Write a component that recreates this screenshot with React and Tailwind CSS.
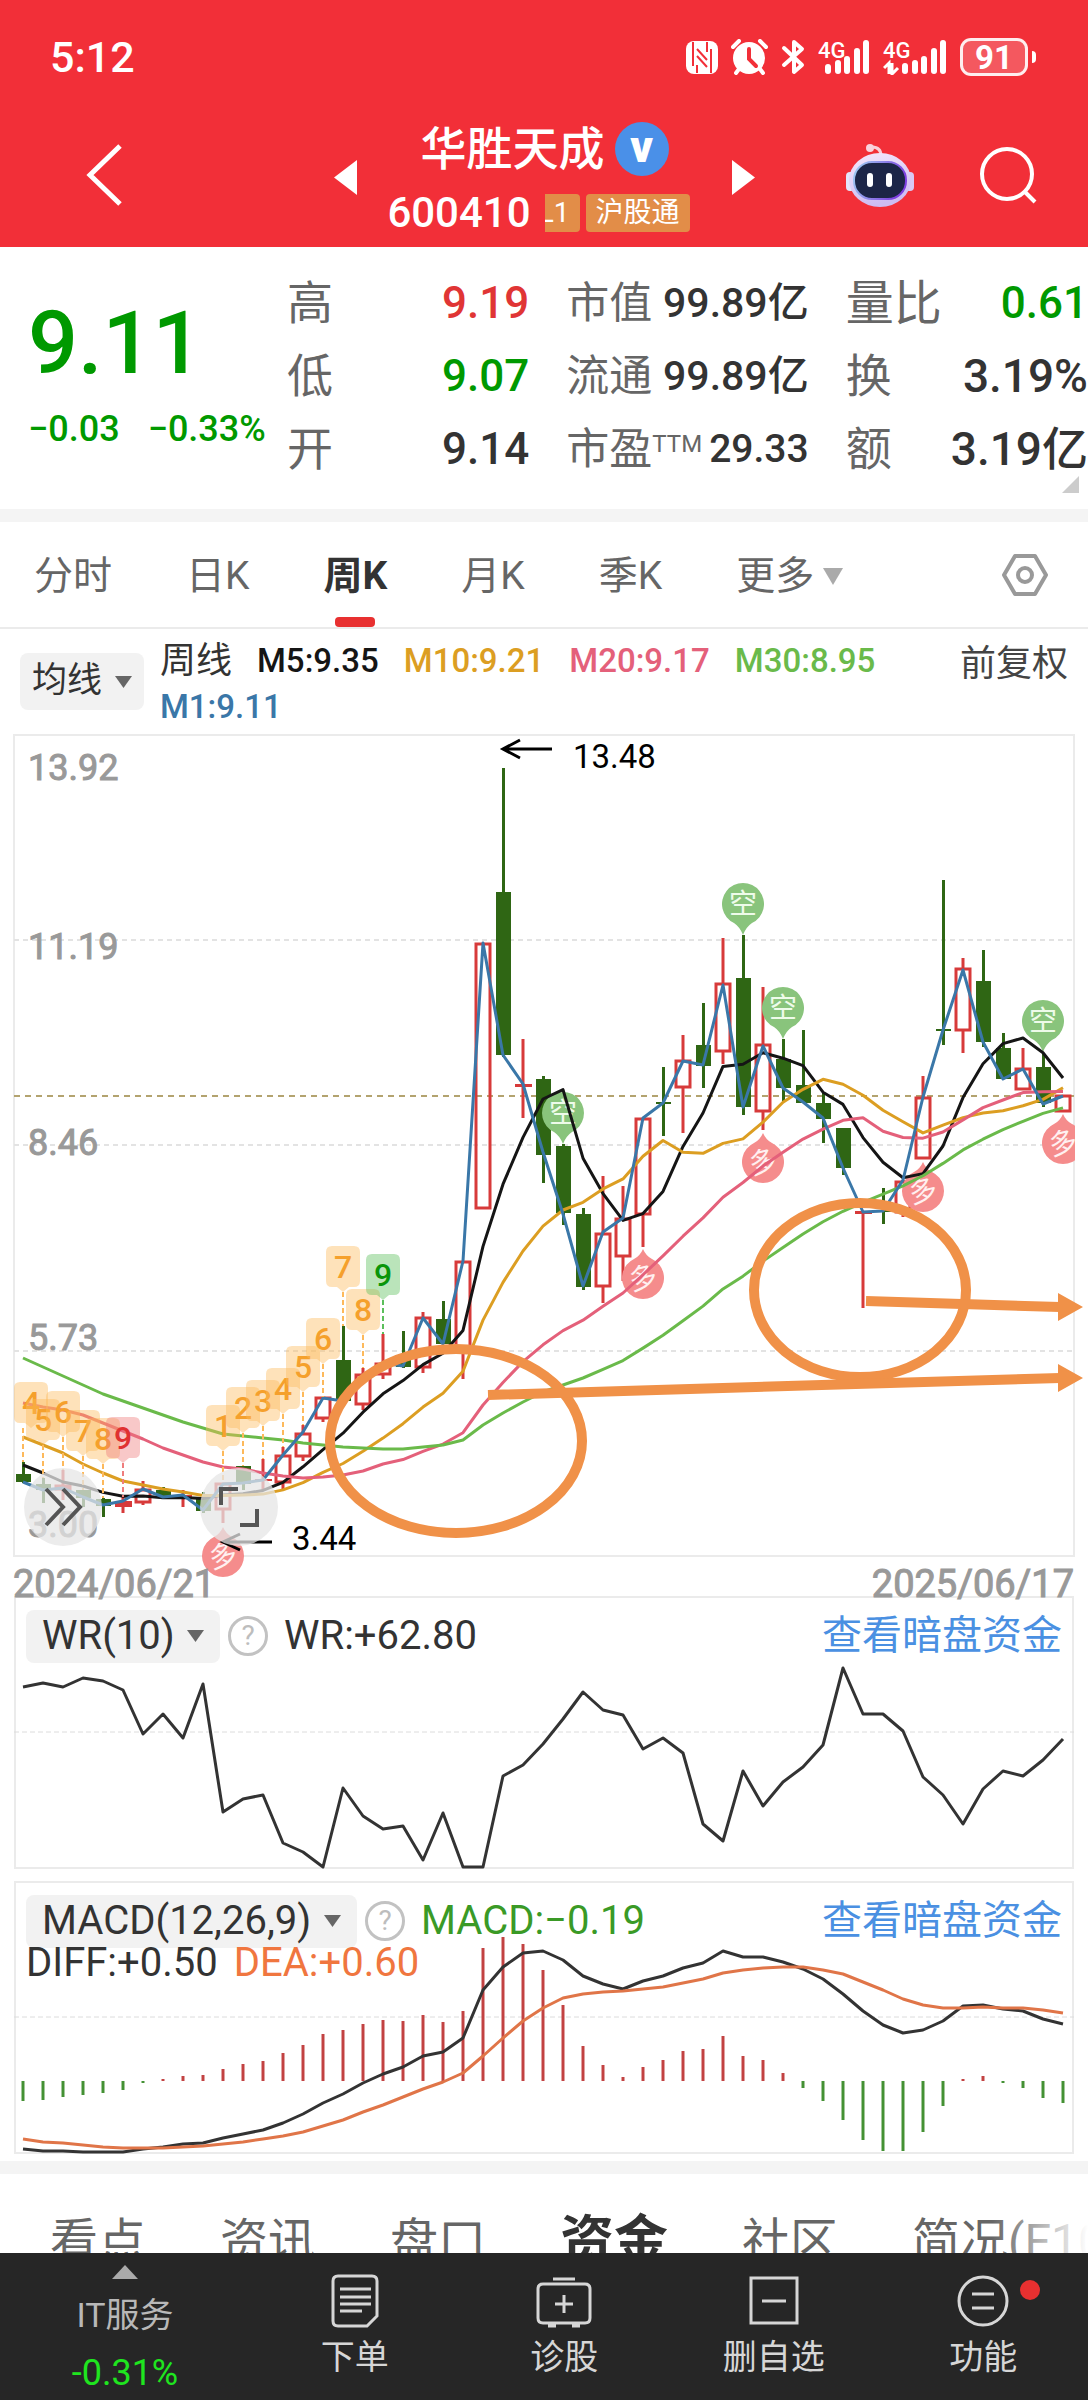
// x position of the n-th week on every chart
const X0 = 23;
const STEP = 20;
const x = (i) => X0 + STEP * i;

// [direction, high, body top, body bottom, low]
const candles = [
    ['d', 1462, 1474, 1482, 1483], ['d', 1478, 1484, 1490, 1503], ['u', 1470, 1486, 1489, 1500],
    ['d', 1490, 1490, 1498, 1507], ['d', 1498, 1499, 1506, 1517], ['f', 1497, 1501, 1507, 1513],
    ['u', 1481, 1490, 1502, 1505], ['d', 1487, 1490, 1497, 1498], ['f', 1490, 1495, 1497, 1507],
    ['d', 1492, 1497, 1511, 1513], ['u', 1483, 1484, 1509, 1523], ['d', 1466, 1466, 1484, 1490],
    ['f', 1459, 1479, 1481, 1490], ['u', 1447, 1456, 1482, 1489], ['u', 1425, 1434, 1456, 1461],
    ['u', 1397, 1398, 1418, 1422], ['d', 1326, 1360, 1401, 1401], ['u', 1368, 1375, 1404, 1410],
    ['u', 1334, 1364, 1374, 1379], ['d', 1331, 1358, 1367, 1368], ['u', 1312, 1318, 1367, 1373],
    ['d', 1301, 1319, 1344, 1344], ['u', 1261, 1262, 1352, 1379], ['u', 943, 944, 1208, 1209],
    ['d', 768, 892, 1055, 1057], ['f', 1039, 1084, 1087, 1118], ['d', 1076, 1079, 1155, 1183],
    ['d', 1144, 1146, 1213, 1225], ['d', 1208, 1214, 1287, 1290], ['u', 1176, 1234, 1286, 1303],
    ['u', 1186, 1219, 1256, 1281], ['u', 1118, 1119, 1214, 1247], ['d', 1067, 1102, 1104, 1136],
    ['u', 1035, 1061, 1087, 1133], ['d', 1003, 1045, 1066, 1088], ['u', 938, 984, 1051, 1064],
    ['d', 935, 978, 1107, 1115], ['u', 987, 1045, 1111, 1130], ['d', 1039, 1059, 1088, 1102],
    ['d', 1030, 1085, 1103, 1103], ['d', 1093, 1103, 1119, 1143], ['d', 1128, 1128, 1168, 1175],
    ['f', 1211, 1211, 1214, 1308], ['d', 1188, 1210, 1212, 1224], ['u', 1180, 1182, 1212, 1217],
    ['u', 1076, 1098, 1158, 1159], ['d', 880, 1029, 1031, 1045], ['u', 958, 969, 1030, 1053],
    ['d', 950, 981, 1042, 1047], ['d', 1033, 1048, 1079, 1079], ['u', 1048, 1069, 1089, 1090],
    ['d', 1053, 1067, 1103, 1107], ['u', 1095, 1096, 1111, 1112],
];

const closes = [
    1482, 1490, 1488, 1497, 1505, 1501, 1489, 1497, 1495, 1510, 1484, 1483, 1480, 1455, 1432, 1398, 1401, 1375,
    1363, 1366, 1318, 1344, 1261, 943, 1055, 1084, 1152, 1214, 1286, 1232, 1218, 1118, 1103, 1061, 1065, 985,
    1107, 1046, 1088, 1102, 1118, 1168, 1212, 1211, 1180, 1097, 1030, 970, 1042, 1079, 1069, 1104, 1096,
];

// first values of each average come from weeks before the visible range
const seed5 = [1465, 1473, 1482, 1486];
const seed10 = [1437, 1445, 1453, 1464, 1473, 1481, 1485, 1489, 1492];
const seed20 = [
    1403, 1407, 1410, 1415, 1423, 1431, 1439, 1448, 1455, 1462, 1467, 1469, 1473, 1476, 1478, 1477, 1475, 1471, 1464,
];
const seed30 = [
    1358, 1367, 1376, 1385, 1394, 1401, 1408, 1415, 1422, 1428, 1434, 1436, 1438, 1440, 1443, 1445, 1447, 1448,
    1449, 1449, 1447, 1445, 1440, 1425, 1413, 1402, 1392, 1385, 1378,
];

function average(period, seed) {
    return closes.map((_, i) => {
        if (i < seed.length) return seed[i];
        const part = closes.slice(i - period + 1, i + 1);
        return part.reduce((a, b) => a + b, 0) / period;
    });
}

const wr = [
    1687, 1683, 1687, 1678, 1681, 1690, 1734, 1714, 1738, 1684, 1812, 1799, 1795, 1843, 1852, 1867, 1788, 1816,
    1829, 1826, 1860, 1813, 1867, 1867, 1776, 1765, 1744, 1719, 1692, 1710, 1715, 1749, 1738, 1753, 1824, 1841,
    1771, 1806, 1782, 1767, 1745, 1668, 1714, 1714, 1731, 1777, 1795, 1824, 1789, 1771, 1776, 1760, 1739,
];

const ZERO = 2081;
const bars = [
    2101, 2100, 2097, 2095, 2093, 2090, 2083, 2079, 2076, 2075, 2069, 2064, 2061, 2053, 2045, 2034, 2030, 2024,
    2020, 2021, 2015, 2022, 2011, 1948, 1937, 1944, 1970, 2005, 2046, 2065, 2077, 2067, 2060, 2051, 2049, 2036,
    2056, 2060, 2073, 2088, 2101, 2120, 2140, 2151, 2151, 2132, 2106, 2079, 2076, 2083, 2088, 2098, 2103,
];
const diff = [
    2149, 2151, 2151, 2152, 2152, 2152, 2149, 2147, 2144, 2143, 2138, 2134, 2130, 2123, 2114, 2103, 2094, 2083,
    2074, 2067, 2056, 2052, 2038, 1990, 1967, 1953, 1951, 1960, 1976, 1984, 1989, 1981, 1976, 1968, 1963, 1951,
    1957, 1957, 1962, 1969, 1979, 1994, 2011, 2025, 2033, 2030, 2021, 2006, 2005, 2009, 2011, 2019, 2024,
];
const dea = [
    2139, 2142, 2143, 2145, 2147, 2148, 2148, 2148, 2147, 2146, 2144, 2142, 2139, 2136, 2132, 2126, 2120, 2112,
    2105, 2097, 2089, 2082, 2073, 2056, 2038, 2021, 2008, 1998, 1994, 1992, 1991, 1989, 1987, 1983, 1979, 1973,
    1970, 1968, 1967, 1967, 1970, 1974, 1982, 1990, 1999, 2005, 2008, 2008, 2007, 2008, 2008, 2010, 2013,
];

// nine-turn tags: [number, box centre x, box top y, week, colour]
const tags = [
    [4, 31, 1382, 0, 'o'], [5, 43, 1399, 1, 'o'], [6, 63, 1391, 2, 'o'], [7, 83, 1410, 3, 'o'],
    [8, 103, 1418, 4, 'o'], [9, 123, 1417, 5, 'r'], [1, 223, 1405, 10, 'o'], [2, 243, 1387, 11, 'o'],
    [3, 263, 1380, 12, 'o'], [4, 283, 1368, 13, 'o'], [5, 303, 1346, 14, 'o'], [6, 323, 1318, 15, 'o'],
    [7, 343, 1246, 16, 'o'], [8, 363, 1289, 17, 'o'], [9, 383, 1254, 18, 'g'],
];
const tagColors = {
    o: { box: '#fdb95b', text: '#f5a02c' },
    r: { box: '#ef7d7d', text: '#e03131' },
    g: { box: '#5bbf5b', text: '#0a950a' },
};

const shorts = [[27, 1113], [36, 904], [38, 1008], [51, 1021]];
const longs = [[10, 1554], [31, 1276], [37, 1160], [45, 1189], [52, 1141]];

const points = (values) => values.map((y, i) => `${x(i)},${y}`).join(' ');

function Line({ values, color, width = 3 }) {
    return <polyline points={points(values)} fill="none" stroke={color} strokeWidth={width} strokeLinejoin="round" />;
}

function Candle({ data, i }) {
    const [dir, high, top, bottom, low] = data;
    if (dir === 'd') {
        return (
            <g fill="#2f6614">
                <rect x={x(i) - 1} y={high} width="3" height={low - high} />
                <rect x={x(i) - 7} y={top} width="15" height={bottom - top} />
            </g>
        );
    }
    return (
        <g stroke="#d73a3a" strokeWidth="3" fill="none">
            <path d={`M${x(i)} ${high}V${top}M${x(i)} ${bottom}V${low}`} />
            {dir === 'f'
                ? <rect x={x(i) - 8} y={top} width="17" height={bottom - top} fill="#d73a3a" stroke="none" />
                : <rect x={x(i) - 7} y={top} width="14" height={bottom - top} />}
        </g>
    );
}

function Tag({ data }) {
    const [num, cx, top, week, tone] = data;
    const c = tagColors[tone];
    const tip = top + 46;
    return (
        <g>
            <path d={`M${x(week)} ${tip}V${candles[week][1]}`} stroke={c.box} strokeWidth="2" strokeDasharray="5 3" />
            <path
                d={`M${cx - 11} ${top}h22q6 0 6 6v29q0 6 -6 6h-5l-6 5l-6 -5h-5q-6 0 -6 -6v-29q0 -6 6 -6z`}
                fill={c.box}
                fillOpacity="0.42"
            />
            <text x={cx} y={top + 32} fontSize="32" fontWeight="500" textAnchor="middle" fill={c.text}>{num}</text>
        </g>
    );
}

function ShortMark({ i, y }) {
    return (
        <g>
            <path
                d={`M${x(i)} ${y + 31}q-3 -8 -9 -12a21 21 0 1 1 18 0q-6 4 -9 12z`}
                fill="#89c47c"
            />
            <text x={x(i)} y={y + 10} fontSize="28" textAnchor="middle" fill="#eefbea">空</text>
        </g>
    );
}

function LongMark({ i, y }) {
    return (
        <g>
            <path
                d={`M${x(i)} ${y - 27}q3 7 9 10a21 21 0 1 1 -18 0q6 -3 9 -10z`}
                fill="#f58c8c"
            />
            <text
                x={x(i)}
                y={y + 12}
                fontSize="28"
                textAnchor="middle"
                fill="#fff0f0"
                transform={`rotate(-14 ${x(i)} ${y + 2})`}
            >
                多
            </text>
        </g>
    );
}

function KLineChart() {
    return (
        <svg viewBox="0 734 1088 862" className="block w-full overflow-visible font-[Roboto,'Noto_Sans_CJK_SC',sans-serif]">
            <defs>
                <clipPath id="frame"><rect x="0" y="734" width="1075" height="862" /></clipPath>
            </defs>
            <rect x="14" y="735" width="1060" height="821" fill="none" stroke="#ebebeb" strokeWidth="2" />
            <path d="M14 940H1074M14 1145H1074M14 1351H1074" stroke="#e3e3e3" strokeWidth="2" strokeDasharray="5 4" />
            <path d="M14 1096H1074" stroke="#b3a36f" strokeWidth="2" strokeDasharray="6 5" />

            <g fontSize="36" fill="#999999" stroke="#999999" strokeWidth="1">
                <text x="28" y="780">13.92</text>
                <text x="28" y="959">11.19</text>
                <text x="28" y="1155">8.46</text>
                <text x="28" y="1350">5.73</text>
                <text x="28" y="1537">3.00</text>
            </g>

            <g clipPath="url(#frame)">
                {candles.map((c, i) => <Candle key={i} data={c} i={i} />)}
                {shorts.map(([i, y]) => <ShortMark key={i} i={i} y={y} />)}
                {longs.map(([i, y]) => <LongMark key={i} i={i} y={y} />)}
                <Line values={average(5, seed5)} color="#151515" />
                <Line values={average(10, seed10)} color="#dc9e22" />
                <Line values={average(20, seed20)} color="#e4607a" />
                <Line values={average(30, seed30)} color="#6aba4a" />
                <Line values={closes} color="#3a77a8" />
                {tags.map((t, i) => <Tag key={i} data={t} />)}
            </g>

            {/* extremes */}
            <g fill="none" stroke="#000" strokeWidth="3">
                <path d="M552 749H503M520 740L503 749L520 758" />
                <path d="M272 1542H223M240 1534L223 1542L240 1550" />
            </g>
            <text x="573" y="768" fontSize="33">13.48</text>
            <text x="292" y="1550" fontSize="33">3.44</text>

            {/* hand-made marks */}
            <g fill="none" stroke="#f09148" strokeWidth="10">
                <ellipse cx="456" cy="1441" rx="126" ry="92" />
                <ellipse cx="860" cy="1290" rx="106" ry="87" />
                <path d="M866 1301L1060 1307M488 1395L1060 1378" />
            </g>
            <path d="M1058 1293L1083 1307L1058 1321zM1058 1364L1083 1378L1058 1392z" fill="#f09148" />

            <g fontSize="38" fill="#999999" stroke="#999999" strokeWidth="1">
                <text x="13" y="1597">2024/06/21</text>
                <text x="1074" y="1597" textAnchor="end">2025/06/17</text>
            </g>
        </svg>
    );
}

function WrChart() {
    return (
        <svg viewBox="14 1596 1060 274" className="col-start-1 row-start-1 block w-full">
            <rect x="15" y="1597" width="1058" height="271" fill="none" stroke="#ebebeb" strokeWidth="2" />
            <path d="M14 1732H1074" stroke="#dcdcdc" strokeWidth="1" strokeDasharray="5 3" />
            <Line values={wr} color="#333333" />
        </svg>
    );
}

function MacdChart() {
    return (
        <svg viewBox="14 1881 1060 274" className="col-start-1 row-start-1 block w-full">
            <rect x="15" y="1882" width="1058" height="271" fill="none" stroke="#ebebeb" strokeWidth="2" />
            <path d="M14 2017H1074" stroke="#dcdcdc" strokeWidth="1" strokeDasharray="5 3" />
            {bars.map((y, i) => (
                <path key={i} d={`M${x(i)} ${ZERO}V${y}`} stroke={y < ZERO ? '#c24242' : '#449134'} strokeWidth="3" />
            ))}
            <Line values={diff} color="#333333" />
            <Line values={dea} color="#e07548" />
        </svg>
    );
}

function Dropdown({ label, value, className }) {
    return (
        <div className={`flex shrink-0 items-center gap-3 rounded-lg bg-[#f2f2f2] text-[#333] ${className}`}>
            <select aria-label={label} className="appearance-none bg-transparent outline-none" defaultValue={value}>
                <option>{value}</option>
            </select>
            <svg viewBox="0 0 17 12" className="h-3 w-[17px]"><path d="M0 0h17L8.500 12z" fill="#666" /></svg>
        </div>
    );
}

function HelpButton() {
    return (
        <button
            aria-label="说明"
            className="flex size-10 shrink-0 items-center justify-center rounded-full border-3 border-[#c2c2c2] text-[28px] leading-none text-[#bdbdbd]"
        >
            ?
        </button>
    );
}

function SignalBars({ extra }) {
    return extra ? (
        <svg viewBox="0 0 64 36" className="h-9 w-16" fill="#fff">
            <text x="0" y="19" fontSize="22" fontWeight="500">4G</text>
            <path d="M1 29l5-5v11M9 24v11l6-6" fill="none" stroke="#fff" strokeWidth="3" />
            <rect x="19" y="24" width="6" height="11" rx="3" />
            <rect x="29" y="21" width="6" height="14" rx="3" />
            <rect x="38" y="17" width="6" height="18" rx="3" />
            <rect x="48" y="9" width="6" height="26" rx="3" />
            <rect x="57" y="1" width="6" height="34" rx="3" />
        </svg>
    ) : (
        <svg viewBox="0 0 52 36" className="h-9 w-[52px]" fill="#fff">
            <text x="0" y="19" fontSize="22" fontWeight="500">4G</text>
            <rect x="7" y="25" width="6" height="10" rx="3" />
            <rect x="17" y="21" width="6" height="14" rx="3" />
            <rect x="26" y="17" width="6" height="18" rx="3" />
            <rect x="36" y="9" width="6" height="26" rx="3" />
            <rect x="45" y="1" width="6" height="34" rx="3" />
        </svg>
    );
}

function StatusBar() {
    return (
        <div className="flex h-[114px] items-center justify-between pl-[50px] pr-[52px]">
            <span className="text-[43px] font-medium leading-none">5:12</span>
            <div className="flex items-center gap-[13px]">
                <svg viewBox="0 0 32 33" className="h-[33px] w-8">
                    <rect x="0" y="0" width="32" height="33" rx="8" fill="#fff" />
                    <path d="M7 1V25M25 8V32" stroke="#f22f38" strokeWidth="2" />
                    <path d="M11 8L21 19M11 15L21 26M11 24V32M21 1V11" fill="none" stroke="#f22f38" strokeWidth="2" />
                </svg>
                <svg viewBox="0 0 37 36" className="h-9 w-[37px]">
                    <circle cx="18" cy="19" r="16" fill="#fff" />
                    <path d="M2 8l6-6M35 8l-6-6M8 30l-3 4M29 30l3 4" stroke="#fff" strokeWidth="4" strokeLinecap="round" />
                    <path d="M18 10v10l7 7" fill="none" stroke="#f22f38" strokeWidth="4" strokeLinecap="round" />
                </svg>
                <svg viewBox="0 0 24 36" className="h-9 w-6" fill="none" stroke="#fff" strokeWidth="4" strokeLinejoin="round" strokeLinecap="round">
                    <path d="M3 9l18 17l-8 7V3l8 7L3 26" />
                </svg>
                <SignalBars />
                <SignalBars extra />
                <div className="flex items-center gap-1">
                    <span className="flex h-[38px] w-[68px] items-center justify-center rounded-[11px] border-3 border-white/90 bg-white/20 text-[33px] font-bold leading-none">
                        91
                    </span>
                    <span className="h-3 w-1 rounded-r-full bg-white" />
                </div>
            </div>
        </div>
    );
}

function Robot() {
    return (
        <svg viewBox="0 0 70 66" className="h-[66px] w-[70px]">
            <defs>
                <linearGradient id="shell" x1="0" y1="0" x2="0.3" y2="1">
                    <stop offset="0" stopColor="#f6e8fb" />
                    <stop offset="1" stopColor="#cdbcf2" />
                </linearGradient>
                <linearGradient id="rim" x1="0" y1="0" x2="1" y2="0.3">
                    <stop offset="0" stopColor="#9fd2f2" />
                    <stop offset="1" stopColor="#7d3fe0" />
                </linearGradient>
            </defs>
            <circle cx="25" cy="6" r="4" fill="#f9d3dd" />
            <path d="M27 5q9 0 9 9" fill="none" stroke="#f9cfd8" strokeWidth="3" />
            <rect x="1" y="30" width="9" height="19" rx="4" fill="#e3e6fb" />
            <rect x="60" y="30" width="9" height="19" rx="4" fill="#d9c9f5" />
            <ellipse cx="35" cy="38" rx="31" ry="27" fill="url(#shell)" />
            <rect x="9" y="20" width="52" height="37" rx="18" fill="#1c2547" stroke="url(#rim)" strokeWidth="2" />
            <rect x="22" y="31" width="6" height="14" rx="3" fill="#fff" />
            <rect x="41" y="31" width="6" height="14" rx="3" fill="#fff" />
        </svg>
    );
}

function Header() {
    return (
        <header className="bg-[#f22f38] text-white">
            <StatusBar />
            <div className="grid h-[133px] grid-cols-[1fr_auto_1fr] items-start pl-[84px] pr-[51px] pt-2">
                <button aria-label="返回" className="mt-[22px] w-10">
                    <svg viewBox="0 0 40 62" className="h-[62px] w-10" fill="none" stroke="#fff" strokeWidth="5">
                        <path d="M36 2L6 31L36 60" />
                    </svg>
                </button>
                <div className="flex w-[421px] -translate-x-4 justify-between">
                    <button aria-label="上一只" className="mt-[38px] self-start">
                        <svg viewBox="0 0 23 35" className="h-[35px] w-[23px]"><path d="M23 0v35L0 17.500z" fill="#fff" /></svg>
                    </button>
                    <div className="flex flex-col items-center gap-[18px]">
                        <div className="flex items-center gap-[10px]">
                            <h1 className="text-[46px] font-medium leading-[54px]">华胜天成</h1>
                            <span className="flex size-[54px] items-center justify-center rounded-full bg-[#4a90e8] pb-1 text-[44px] font-black leading-none">v</span>
                        </div>
                        <div className="flex items-center gap-[6px] pr-3">
                            <span className="mr-2 text-[42px] font-medium leading-[38px]">600410</span>
                            <span className="flex h-[38px] w-[35px] justify-end overflow-hidden rounded-r bg-[#e28d48] pr-[10px] text-[28px] leading-[38px]">L1</span>
                            <span className="h-[38px] rounded bg-[#e28d48] px-[10px] text-[28px] leading-[38px]">沪股通</span>
                        </div>
                    </div>
                    <button aria-label="下一只" className="mt-[38px] self-start">
                        <svg viewBox="0 0 23 35" className="h-[35px] w-[23px]"><path d="M0 0v35L23 17.500z" fill="#fff" /></svg>
                    </button>
                </div>
                <div className="mt-5 flex items-center justify-end gap-16">
                    <button aria-label="智能助手"><Robot /></button>
                    <button aria-label="搜索">
                        <svg viewBox="0 0 58 58" className="size-[58px]" fill="none" stroke="#fff" strokeWidth="4">
                            <circle cx="28" cy="28" r="25" />
                            <path d="M45 45l11 11" />
                        </svg>
                    </button>
                </div>
            </div>
        </header>
    );
}

function Quote({ label, sup, value, color = 'text-[#333]', size = 'text-[44px]', labelSize = 'text-[46px]' }) {
    return (
        <div className="flex items-center justify-between whitespace-nowrap">
            <dt className={`text-[#666] ${labelSize} leading-[73px]`}>
                {label}
                {sup && <sup className="text-[24px]">{sup}</sup>}
            </dt>
            <dd className={`font-medium leading-[73px] ${size} ${color}`}>{value}</dd>
        </div>
    );
}

function QuotePanel() {
    return (
        <section className="relative grid h-[262px] grid-cols-[250px_1fr_1fr_1fr] gap-x-[37px] pt-5">
            <div className="whitespace-nowrap pl-7 text-[#009900]">
                <p className="mt-7 text-[88px] font-medium leading-[96px]">9.11</p>
                <p className="mt-4 flex gap-7 text-[36px] font-medium leading-[44px]">
                    <span>−0.03</span>
                    <span>−0.33%</span>
                </p>
            </div>
            <dl>
                <Quote label="高" value="9.19" color="text-[#e03535]" />
                <Quote label="低" value="9.07" color="text-[#009900]" />
                <Quote label="开" value="9.14" />
            </dl>
            <dl>
                <Quote label="市值" value="99.89亿" size="text-[41px]" labelSize="text-[43px]" />
                <Quote label="流通" value="99.89亿" size="text-[41px]" labelSize="text-[43px]" />
                <Quote label="市盈" sup="TTM" value="29.33" size="text-[39px]" labelSize="text-[43px]" />
            </dl>
            <dl>
                <Quote label="量比" value="0.61" color="text-[#009900]" labelSize="text-[48px]" />
                <Quote label="换" value="3.19%" size="text-[46px]" />
                <Quote label="额" value="3.19亿" size="text-[46px]" />
            </dl>
            <span className="absolute bottom-4 right-[9px] size-[17px] bg-[#ccc] [clip-path:polygon(100%_0,100%_100%,0_100%)]" />
        </section>
    );
}

function PeriodTabs() {
    const tabs = ['分时', '日K', '周K', '月K', '季K'];
    return (
        <nav className="flex h-[107px] items-center border-b-2 border-[#ebebeb] pl-[34px] pr-10 text-[39px] text-[#666]">
            <div className="flex h-full flex-1 gap-[74px]">
                {tabs.map((tab) => (
                    <button key={tab} className={`relative h-full pt-1 ${tab === '周K' ? 'font-bold text-[#333]' : ''}`}>
                        {tab}
                        {tab === '周K' && (
                            <span className="absolute bottom-0 left-1/2 h-[10px] w-10 -translate-x-1/2 rounded bg-[#e83030]" />
                        )}
                    </button>
                ))}
                <button className="flex items-center gap-[9px] pt-1">
                    更多
                    <svg viewBox="0 0 20 17" className="h-[17px] w-5"><path d="M0 0h20L10 17z" fill="#aaa" /></svg>
                </button>
            </div>
            <button aria-label="设置">
                <svg viewBox="0 0 46 44" className="h-11 w-[46px]" fill="none" stroke="#999" strokeWidth="4" strokeLinejoin="round">
                    <path d="M13 3h20l11 19l-11 19H13L2 22z" />
                    <circle cx="23" cy="22" r="7" />
                </svg>
            </button>
        </nav>
    );
}

function AverageLegend() {
    return (
        <div className="flex h-[105px] items-center gap-4 px-5">
            <Dropdown label="指标" value="均线" className="h-[57px] px-3 text-[35px]" />
            <div className="flex flex-1 flex-wrap gap-x-[25px] whitespace-nowrap pt-1 text-[33px] font-medium leading-[46px]">
                <span className="text-[36px] font-normal text-[#333]">周线</span>
                <span className="text-[#151515]">M5:9.35</span>
                <span className="text-[#dc9e22]">M10:9.21</span>
                <span className="text-[#e4607a]">M20:9.17</span>
                <span className="text-[#6aba4a]">M30:8.95</span>
                <span className="basis-full text-[#3a77a8]">M1:9.11</span>
            </div>
            <button className="self-start pt-3 text-[36px] leading-[46px] text-[#444]">前复权</button>
        </div>
    );
}

function WrPanel() {
    return (
        <section className="mx-[14px] grid">
            <WrChart />
            <div className="z-10 col-start-1 row-start-1 flex h-20 items-center gap-2 self-start pl-3 pr-[12px] text-[40px] text-[#333]">
                <Dropdown label="副图一" value="WR(10)" className="h-[53px] px-4" />
                <HelpButton />
                <span className="ml-2 flex-1">WR:+62.80</span>
                <a href="#wr" className="text-[#4a90e2]">查看暗盘资金</a>
            </div>
        </section>
    );
}

function MacdPanel() {
    return (
        <section className="mx-[14px] mt-[11px] grid">
            <MacdChart />
            <div className="z-10 col-start-1 row-start-1 self-start text-[40px] text-[#333]">
                <div className="flex h-20 items-center gap-2 pl-3 pr-[12px]">
                    <Dropdown label="副图二" value="MACD(12,26,9)" className="h-[53px] px-4" />
                    <HelpButton />
                    <span className="ml-2 flex-1 text-[#3a9a26]">MACD:−0.19</span>
                    <a href="#macd" className="text-[#4a90e2]">查看暗盘资金</a>
                </div>
                <p className="-mt-4 flex gap-4 pl-3 leading-[36px]">
                    <span>DIFF:+0.50</span>
                    <span className="text-[#f0763f]">DEA:+0.60</span>
                </p>
            </div>
        </section>
    );
}

function SectionTabs() {
    const tabs = ['看点', '资讯', '盘口', '资金', '社区', '简况(F10)'];
    return (
        <nav className="relative flex items-center gap-[74px] overflow-hidden whitespace-nowrap pl-[50px] pt-[30px] text-[48px] leading-[76px] text-[#666]">
            {tabs.map((tab) => (
                <button key={tab} className={tab === '资金' ? 'text-[54px] font-bold text-[#333]' : ''}>{tab}</button>
            ))}
            <span className="absolute inset-y-0 right-0 w-24 bg-linear-to-r from-white/0 to-white" />
        </nav>
    );
}

function BottomItem({ label, children }) {
    return (
        <button className="flex flex-1 flex-col items-center gap-[7px] pt-[21px]">
            <svg viewBox="0 0 56 54" className="h-[54px] w-14 overflow-visible" fill="none" stroke="#d6d6d6" strokeWidth="3">
                {children}
            </svg>
            <span className="text-[34px] leading-[44px]">{label}</span>
        </button>
    );
}

function BottomBar() {
    return (
        <footer className="flex h-[147px] shrink-0 items-start bg-[#262626] text-[#d6d6d6]">
            <a href="#it" className="flex w-[250px] flex-col items-center pt-3 text-[#b8b8b8]">
                <svg viewBox="0 0 26 14" className="h-[14px] w-[26px]"><path d="M13 0L26 14H0z" fill="#aaa" /></svg>
                <span className="mt-[14px] text-[34px] leading-[44px]">IT服务</span>
                <span className="mt-4 text-[36px] leading-[40px] text-[#1fe51f]">-0.31%</span>
            </a>
            <BottomItem label="下单">
                <path d="M11 2h34q5 0 5 5v35l-10 10H11q-5 0-5-5V7q0-5 5-5z" />
                <path d="M13 15h31M13 23h31M13 30h31M13 37h22" />
            </BottomItem>
            <BottomItem label="诊股">
                <path d="M17 5h22M7 10h42q5 0 5 5v29q0 5-5 5H7q-5 0-5-5V15q0-5 5-5zM12 52h8M36 52h8M28 21v18M19 30h18" />
            </BottomItem>
            <BottomItem label="删自选">
                <path d="M5 4h46v45H5zM16 27h24" />
            </BottomItem>
            <BottomItem label="功能">
                <circle cx="28" cy="27" r="24" />
                <path d="M17 20h22M17 34h22" />
                <circle cx="75" cy="16" r="10" fill="#e83030" stroke="none" />
            </BottomItem>
        </footer>
    );
}

export default function App() {
    return (
        <div className="flex h-screen flex-col overflow-hidden bg-white font-[Roboto,'Noto_Sans_CJK_SC',sans-serif]">
            <Header />
            <main className="min-h-0 flex-1 overflow-hidden">
                <QuotePanel />
                <div className="h-[13px] bg-[#f4f4f4]" />
                <PeriodTabs />
                <AverageLegend />
                <div className="relative">
                    <KLineChart />
                    <button aria-label="展开" className="absolute bottom-[50px] left-6 flex size-[78px] items-center justify-center rounded-full bg-[#e6e6e6]/75">
                        <svg viewBox="0 0 40 40" className="size-10" fill="none" stroke="#555" strokeWidth="4">
                            <path d="M3 2l17 18L3 38M20 2l17 18L20 38" />
                        </svg>
                    </button>
                    <button aria-label="全屏" className="absolute bottom-[50px] left-[200px] flex size-[78px] items-center justify-center rounded-full bg-[#e6e6e6]/75">
                        <svg viewBox="0 0 40 40" className="size-10" fill="none" stroke="#555" strokeWidth="4">
                            <path d="M2 18V2h17M38 22v16H21" />
                        </svg>
                    </button>
                </div>
                <WrPanel />
                <MacdPanel />
                <div className="mt-[6px] h-[13px] bg-[#f4f4f4]" />
                <SectionTabs />
            </main>
            <BottomBar />
        </div>
    );
}
